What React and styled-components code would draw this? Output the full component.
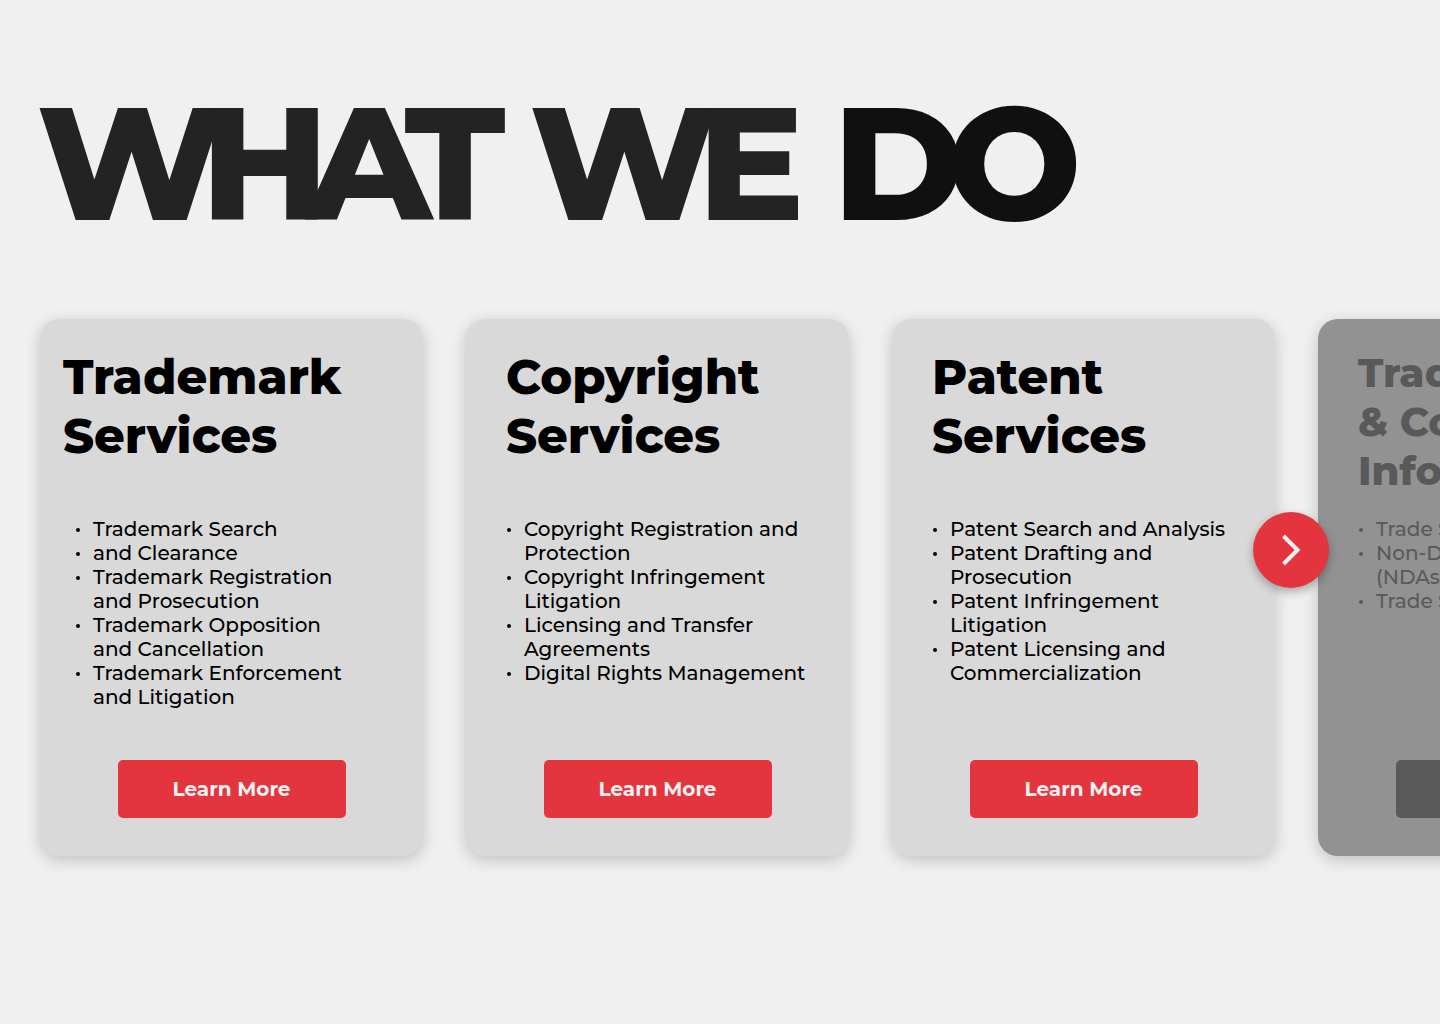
import styled, { createGlobalStyle } from "styled-components"

const GlobalStyle = createGlobalStyle`
  * {
    box-sizing: border-box;
  }

  body {
    margin: 0;
    background-color: #f0f0f0;
    font-family: Montserrat, Inter, "Open Sans", sans-serif;
    color: #000;
  }
`

const Section = styled.section`
  min-height: 100vh;
  padding: 65px 0 64px;
  overflow: hidden;
`

const Heading = styled.h1`
  margin: 0 0 57px;
  padding-left: 37px;
  font-size: 159px;
  font-weight: 800;
  line-height: 197px;
  color: #232323;
  white-space: nowrap;
`

const Word = styled.span`
  letter-spacing: ${props => props.$tracking};
  color: ${props => (props.$accent ? "#101010" : "inherit")};
`

const Carousel = styled.div`
  position: relative;
  padding-left: 40px;
`

const Track = styled.div`
  display: flex;
  gap: 43px;
`

const Card = styled.article`
  flex: 0 0 max(383px, 27%);
  display: flex;
  flex-direction: column;
  min-height: 537px;
  padding: 29px 0 38px ${props => (props.$compact ? "23px" : "40px")};
  border-radius: 20px;
  background-color: ${props => (props.$dimmed ? "#929292" : "#d9d9d9")};
  color: ${props => (props.$dimmed ? "#595959" : "#000")};
  box-shadow: 0 4px 16px rgba(0, 0, 0, 0.2);
`

const CardTitle = styled.h2`
  min-height: 147px;
  margin: 0 0 22px;
  font-size: ${props => (props.$small ? "40px" : "48px")};
  line-height: ${props => (props.$small ? "49px" : "59px")};
  font-weight: 800;
  white-space: pre-line;
`

const List = styled.ul`
  margin: 0;
  padding: 0 0 0 ${props => (props.$compact ? "12px" : "0")};
  list-style: none;
`

const Item = styled.li`
  display: flex;
  font-size: 20px;
  font-weight: 500;
  line-height: 24px;
  white-space: pre-line;

  &::before {
    content: "";
    flex: none;
    width: 4px;
    height: 4px;
    margin: 11px 13px 0 1px;
    border-radius: 50%;
    background-color: currentColor;
  }
`

const Footer = styled.div`
  display: flex;
  justify-content: center;
  margin-top: auto;
  margin-left: ${props => (props.$compact ? "-23px" : "-40px")};
`

const LearnMore = styled.button`
  width: 228px;
  height: 58px;
  border: 0;
  border-radius: 5px;
  background-color: ${props => (props.$dimmed ? "#595959" : "#e4353f")};
  color: ${props => (props.$dimmed ? "#929292" : "#f0f0f0")};
  font-family: inherit;
  font-size: 20px;
  font-weight: 700;
  cursor: pointer;
`

const NextButton = styled.button`
  position: absolute;
  top: 193px;
  right: 111px;
  display: flex;
  align-items: center;
  justify-content: center;
  width: 76px;
  height: 76px;
  padding: 0;
  border: 0;
  border-radius: 50%;
  background-color: #e4353f;
  box-shadow: 0 4px 10px rgba(0, 0, 0, 0.3);
  cursor: pointer;
`

const services = [
  {
    title: "Trademark\nServices",
    compact: true,
    items: [
      "Trademark Search",
      "and Clearance",
      "Trademark Registration\nand Prosecution",
      "Trademark Opposition\nand Cancellation",
      "Trademark Enforcement\nand Litigation",
    ],
  },
  {
    title: "Copyright\nServices",
    items: [
      "Copyright Registration and\nProtection",
      "Copyright Infringement\nLitigation",
      "Licensing and Transfer\nAgreements",
      "Digital Rights Management",
    ],
  },
  {
    title: "Patent\nServices",
    items: [
      "Patent Search and Analysis",
      "Patent Drafting and\nProsecution",
      "Patent Infringement\nLitigation",
      "Patent Licensing and\nCommercialization",
    ],
  },
  {
    title: "Trade Secrets\n& Confidential\nInformation",
    dimmed: true,
    items: [
      "Trade Secret Protection",
      "Non-Disclosure Agreements\n(NDAs)",
      "Trade Secret Litigation",
    ],
  },
]

const ServiceCard = ({ title, items, compact, dimmed }) => (
  <Card $compact={compact} $dimmed={dimmed}>
    <CardTitle $small={dimmed}>{title}</CardTitle>
    <List $compact={compact}>
      {items.map(item => (
        <Item key={item}>{item}</Item>
      ))}
    </List>
    <Footer $compact={compact}>
      <LearnMore type="button" $dimmed={dimmed}>Learn More</LearnMore>
    </Footer>
  </Card>
)

export default function App() {
  return (
    <>
      <GlobalStyle />
      <Section>
        <Heading>
          <Word $tracking="-22px">WHAT</Word>{" "}
          <Word $tracking="-18px">WE</Word>{" "}
          <Word $tracking="-17px" $accent>DO</Word>
        </Heading>
        <Carousel>
          <Track>
            {services.map(service => (
              <ServiceCard key={service.title} {...service} />
            ))}
          </Track>
          <NextButton type="button" aria-label="Next services">
            <svg width="76" height="76" viewBox="0 0 76 76" fill="none" aria-hidden="true">
              <path d="M30.5 24 44.5 38 30.5 52" stroke="#f0f0f0" strokeWidth="4" />
            </svg>
          </NextButton>
        </Carousel>
      </Section>
    </>
  )
}
